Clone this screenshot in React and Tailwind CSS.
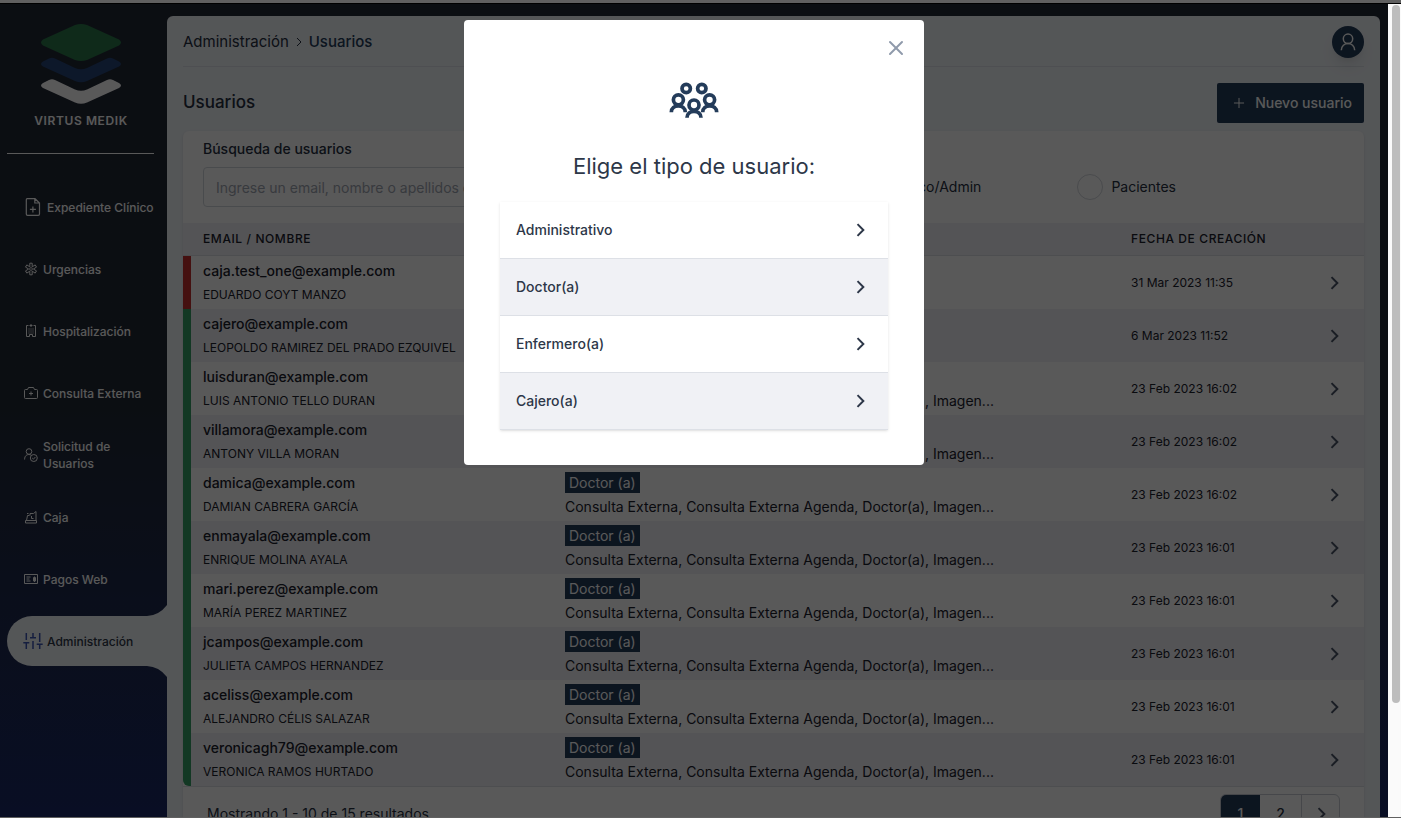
import React from 'react';
import { Plus, X } from 'lucide-react';

const users = [
  { email: 'caja.test_one@example.com', name: 'EDUARDO COYT MANZO', role: 'Cajero (a)', areas: 'Caja', date: '31 Mar 2023 11:35', active: false },
  { email: 'cajero@example.com', name: 'LEOPOLDO RAMIREZ DEL PRADO EZQUIVEL', role: 'Cajero (a)', areas: 'Caja', date: '6 Mar 2023 11:52', active: true },
  { email: 'luisduran@example.com', name: 'LUIS ANTONIO TELLO DURAN', date: '23 Feb 2023 16:02', active: true },
  { email: 'villamora@example.com', name: 'ANTONY VILLA MORAN', date: '23 Feb 2023 16:02', active: true },
  { email: 'damica@example.com', name: 'DAMIAN CABRERA GARCÍA', date: '23 Feb 2023 16:02', active: true },
  { email: 'enmayala@example.com', name: 'ENRIQUE MOLINA AYALA', date: '23 Feb 2023 16:01', active: true },
  { email: 'mari.perez@example.com', name: 'MARÍA PEREZ MARTINEZ', date: '23 Feb 2023 16:01', active: true },
  { email: 'jcampos@example.com', name: 'JULIETA CAMPOS HERNANDEZ', date: '23 Feb 2023 16:01', active: true },
  { email: 'aceliss@example.com', name: 'ALEJANDRO CÉLIS SALAZAR', date: '23 Feb 2023 16:01', active: true },
  { email: 'veronicagh79@example.com', name: 'VERONICA RAMOS HURTADO', date: '23 Feb 2023 16:01', active: true },
];

const doctorAreas = 'Consulta Externa, Consulta Externa Agenda, Doctor(a), Imagen...';

const userTypes = ['Administrativo', 'Doctor(a)', 'Enfermero(a)', 'Cajero(a)'];

const Chevron = () => (
  <svg className="size-5" viewBox="0 0 24 24" fill="none" stroke="currentColor" strokeWidth="2.4" aria-hidden="true">
    <path d="M9 5l7 7-7 7" />
  </svg>
);

const Icon = ({ children }) => (
  <svg className="size-3.5 shrink-0" viewBox="0 0 14 14" fill="none" stroke="currentColor" aria-hidden="true">
    {children}
  </svg>
);

const FileIcon = () => (
  <svg className="h-[18px] w-4 shrink-0" viewBox="0 0 16 18" fill="none" stroke="currentColor" strokeWidth="1.2" aria-hidden="true">
    <path d="M2.2.7H10L14.5 5V16a1.3 1.3 0 0 1-1.3 1.3H2.6A1.3 1.3 0 0 1 1.3 16V1.7a1 1 0 0 1 .9-1zM9.8.8V5h4.6M7.9 8.4v6M4.9 11.4h6" />
  </svg>
);

const StarIcon = () => (
  <Icon>
    <path d="M5.8 1.2h2.4v3.6l3-1.9 1.3 2.2L9.4 7l3.1 1.9-1.3 2.2-3-1.9v3.6H5.8V9.2l-3 1.9-1.3-2.2L4.6 7 1.5 5.1l1.3-2.2 3 1.9z" />
    <circle cx="7" cy="7" r="1.4" strokeWidth="0.8" />
  </Icon>
);

const BuildingIcon = () => (
  <Icon>
    <path d="M4.5 1.5h-2v11h3v-2h3v2h3v-11h-2M7 0v3M5.500 1.500h3" />
    <path strokeDasharray="1 1" d="M5 4.500v5M7 4.500v5M9 4.500v5" />
  </Icon>
);

const KitIcon = () => (
  <Icon>
    <path d="M1.500 3.500h2L4.500 1.500h5l1 2h2q1 0 1 1v7q0 1-1 1h-11q-1 0-1-1v-7q0-1 1-1zM7 5.500v4M5 7.500h4" />
  </Icon>
);

const UserCheckIcon = () => (
  <Icon>
    <circle cx="5" cy="3.500" r="2.800" />
    <path d="M.6 11.500C.6 7.500 3 6.500 5 6.500q1.500 0 2.500 1" />
    <circle cx="9.800" cy="10" r="3.500" />
    <path d="M8.200 10l1.200 1.200 2-2.200" />
  </Icon>
);

const RegisterIcon = () => (
  <Icon>
    <path d="M1.500 10.500h11v2.500h-11zM2.500 10.500l1-5h2M12 10.500V1.500L9.500 3.500h-3.500v2M7.500 6v2.500h2M3 3.500h1.500" />
  </Icon>
);

const CardIcon = () => (
  <Icon>
    <path d="M.5 2.500h13v9H.5zM2.500 5h4M2.500 7h3M2.500 9h4M9.500 5.500h2v3.500h-2zM10.500 4.500v5.500" />
  </Icon>
);

const SlidersIcon = () => (
  <svg className="h-[18px] w-5 shrink-0 text-[#3c56b4]" viewBox="0 0 20 18" fill="none" stroke="currentColor" strokeWidth="1.5" aria-hidden="true">
    <path d="M3.300 1v7M.3 10.700h6M3.300 10.700V17M10 1v4.500M7 5.700h6M10 9v8M16.700 1v9M13.700 12.200h6M16.700 12.200V17" />
  </svg>
);

const PersonIcon = () => (
  <svg className="size-5" viewBox="0 0 20 20" fill="none" stroke="currentColor" strokeWidth="1.500" aria-hidden="true">
    <circle cx="10" cy="6.800" r="4.700" />
    <path d="M3.300 18.300c0-9 13.400-9 13.400 0" />
  </svg>
);

const GroupIcon = () => (
  <svg className="h-9 w-[50px]" viewBox="0 0 50 36" fill="none" stroke="currentColor" strokeWidth="3.700" aria-hidden="true">
    <circle cx="17.200" cy="6.500" r="4.200" />
    <circle cx="32.800" cy="6.500" r="4.200" />
    <circle cx="9.400" cy="17.800" r="5" />
    <circle cx="40.600" cy="17.800" r="5" />
    <circle cx="25" cy="23" r="5" />
    <path d="M2.300 30.300c0-8.600 14-8.600 14 0M33.700 30.300c0-8.600 14-8.600 14 0M18 35.800c0-8.600 14-8.600 14 0" />
  </svg>
);

const Logo = () => (
  <svg className="size-20" viewBox="0 0 80 80" aria-hidden="true">
    <path fill="#2b7a4b" d="M34 1Q40-1 46 1L78 15.500Q82 18.500 78 21.500L46 36Q40 38 34 36L2 21.500Q-2 18.500 2 15.500Z" />
    <path fill="#26467a" d="M2 37.500L8 34.500Q11 33 14 34.500L34 44Q40 46.500 46 44L66 34.500Q69 33 72 34.500L78 37.500Q82 40 78 42.500L46 57Q40 59.500 34 57L2 42.500Q-2 40 2 37.500Z" />
    <path fill="#ffffff" d="M2 59L8 56Q11 54.500 14 56L34 65.500Q40 68 46 65.500L66 56Q69 54.500 72 56L78 59Q82 61.500 78 64L46 78.500Q40 81 34 78.500L2 64Q-2 61.500 2 59Z" />
  </svg>
);

const menu = [
  { label: 'Expediente Clínico', icon: <FileIcon />, wide: true },
  { label: 'Urgencias', icon: <StarIcon /> },
  { label: 'Hospitalización', icon: <BuildingIcon /> },
  { label: 'Consulta Externa', icon: <KitIcon /> },
  { label: 'Solicitud de Usuarios', icon: <UserCheckIcon /> },
  { label: 'Caja', icon: <RegisterIcon /> },
  { label: 'Pagos Web', icon: <CardIcon /> },
];

const Sidebar = () => (
  <aside className="w-[167px] shrink-0 text-white">
    <div className="mr-[5px] flex flex-col items-center pt-5">
      <Logo />
      <p className="mt-[9px] text-xs leading-4 font-semibold tracking-wider">VIRTUS MEDIK</p>
    </div>
    <hr className="mt-6 mr-[13px] ml-[7px] border-white" />
    <nav className="mt-[22px] text-xs leading-[17px] font-medium">
      {menu.map((item) => (
        <a
          key={item.label}
          href="#"
          className={item.wide ? 'flex h-[62px] items-center gap-[6px] pl-[25px] whitespace-nowrap' : 'flex h-[62px] items-center gap-[5px] pr-6 pl-6'}
        >
          {item.icon}
          <span>{item.label}</span>
        </a>
      ))}
      <a href="#" className="relative mt-[6px] ml-[7px] flex h-[50px] items-center gap-1 rounded-l-full bg-[#f1f5f9] pl-4 text-[#2d3748]">
        <svg className="absolute -top-[11px] right-0 h-[11px] w-5 text-[#f1f5f9]" viewBox="0 0 20 11" fill="currentColor" aria-hidden="true">
          <path d="M0 11Q12 10.500 20 0V11Z" />
        </svg>
        <SlidersIcon />
        <span>Administración</span>
        <svg className="absolute right-0 -bottom-[11px] h-[11px] w-5 text-[#f1f5f9]" viewBox="0 0 20 11" fill="currentColor" aria-hidden="true">
          <path d="M0 0Q12 .5 20 11V0Z" />
        </svg>
      </a>
    </nav>
  </aside>
);

const UserRow = ({ user }) => (
  <tr className="h-[53px] even:bg-[#f0f1f5] [&:last-child>td:first-child]:rounded-bl-md">
    <td className={user.active ? 'border-l-8 border-[#38a169] pl-3' : 'border-l-8 border-[#c53030] pl-3'}>
      <div className="text-sm leading-6 font-medium">{user.email}</div>
      <div className="text-xs leading-6">{user.name}</div>
    </td>
    <td className="pl-5">
      <div className="flex h-6 items-center">
        <span className="bg-[#243c5a] px-1 text-sm leading-[21px] text-white">{user.role || 'Doctor (a)'}</span>
      </div>
      <div className="truncate text-sm leading-6">{user.areas || doctorAreas}</div>
    </td>
    <td className="pl-5 text-xs">{user.date}</td>
    <td className="pl-5">
      <button type="button" className="block text-[#4a5568]" aria-label={`Ver ${user.email}`}>
        <Chevron />
      </button>
    </td>
  </tr>
);

const UsersCard = () => (
  <section className="mt-2 rounded-md bg-white shadow">
    <div className="px-5 pt-[9px] pb-4">
      <label htmlFor="search" className="block text-sm leading-[18px] font-medium">Búsqueda de usuarios</label>
      <div className="mt-[9px] flex items-center">
        <input
          id="search"
          type="text"
          placeholder="Ingrese un email, nombre o apellidos del usuario"
          className="h-10 w-[420px] rounded border border-[#d2d6dc] px-3 text-sm placeholder:text-[#9fa6b2]"
        />
        <div className="flex flex-1 justify-end gap-24 pr-[168px] text-sm">
          <label className="flex items-center gap-2">
            <input type="radio" name="kind" className="size-[26px] appearance-none rounded-full border border-[#d2d6dc]" />
            Médico/Admin
          </label>
          <label className="flex items-center gap-2">
            <input type="radio" name="kind" className="size-[26px] appearance-none rounded-full border border-[#d2d6dc]" />
            Pacientes
          </label>
        </div>
      </div>
    </div>
    <table className="w-full table-fixed border-separate border-spacing-0 text-left text-[#1a202c]">
      <thead>
        <tr className="h-[33px] bg-[#f0f1f5] text-xs tracking-wider">
          <th className="w-[362px] border-b border-[#dde0e6] pl-5 font-medium">EMAIL / NOMBRE</th>
          <th className="border-b border-[#dde0e6] pl-5 font-medium">ROL / ÁREAS</th>
          <th className="w-[193px] border-b border-[#dde0e6] pl-5 font-medium">FECHA DE CREACIÓN</th>
          <th className="w-[60px] border-b border-[#dde0e6]" aria-label="Acciones" />
        </tr>
      </thead>
      <tbody>
        {users.map((user) => <UserRow key={user.email} user={user} />)}
      </tbody>
    </table>
    <div className="flex items-center justify-between border-t border-[#dde0e6] px-6 py-[7px] text-sm">
      <p>Mostrando 1 - 10 de 15 resultados</p>
      <div className="flex h-10 overflow-hidden rounded-md border border-[#c8ccd4] font-medium">
        <button type="button" className="w-[39px] bg-[#243c5a] text-white">1</button>
        <button type="button" className="w-[42px] border-r border-[#c8ccd4]">2</button>
        <button type="button" className="flex w-[37px] items-center justify-center text-[#4a5568]" aria-label="Siguiente"><Chevron /></button>
      </div>
    </div>
  </section>
);

const UserTypeModal = () => (
  <div role="dialog" aria-modal="true" aria-labelledby="modal-title" className="w-[460px] rounded bg-white px-9 pb-[35px] text-[#2d3748]">
    <div className="-mr-[22px] flex justify-end pt-[14px]">
      <button type="button" className="p-[2px] text-[#8f9aab]" aria-label="Cerrar"><X className="size-6" strokeWidth={2} /></button>
    </div>
    <div className="mt-5 flex justify-center text-[#243c5a]"><GroupIcon /></div>
    <h2 id="modal-title" className="mt-8 text-center text-[22px] leading-8">Elige el tipo de usuario:</h2>
    <ul className="mt-5 shadow">
      {userTypes.map((type) => (
        <li key={type} className="border-b border-[#dde0e6] even:bg-[#f0f1f5]">
          <button type="button" className="flex h-14 w-full items-center justify-between pr-[18px] pl-4 text-sm font-medium">
            {type}
            <Chevron />
          </button>
        </li>
      ))}
    </ul>
  </div>
);

const App = () => (
  <div className="flex h-screen flex-col overflow-hidden bg-[#606060] font-['Inter',sans-serif]">
    <div className="mt-[3px] mb-px flex min-h-0 flex-1 border-t border-black">
      <div className="relative flex min-w-0 flex-1 overflow-hidden bg-linear-to-b from-[#222836] from-50% to-[#1b2a68] text-[#252f3f]">
        <Sidebar />
        <main className="mt-3 mr-2 h-fit min-w-0 flex-1 rounded-md bg-[#f1f5f9] px-4 pb-4">
          <header className="flex h-[51px] items-center justify-between border-b border-[#dfe3ea] pt-0.5">
            <nav className="flex items-center gap-1 text-[15px]" aria-label="Ruta">
              <a href="#">Administración</a>
              <svg className="size-3" viewBox="0 0 12 12" fill="none" stroke="currentColor" aria-hidden="true"><path d="M4 2l4 4-4 4" /></svg>
              <a href="#" className="font-medium text-[#243c5a]">Usuarios</a>
            </nav>
            <button type="button" className="flex size-8 items-center justify-center rounded-full bg-[#243c5a] text-white shadow-lg" aria-label="Perfil"><PersonIcon /></button>
          </header>
          <div className="mt-4 flex items-center justify-between">
            <h1 className="text-[17px] font-medium">Usuarios</h1>
            <button type="button" className="flex h-10 items-center gap-2 rounded-xs bg-[#243c5a] pr-3 pl-[14px] text-sm font-medium text-white">
              <Plus className="size-4" strokeWidth={1.5} />
              Nuevo usuario
            </button>
          </div>
          <UsersCard />
        </main>
        <div className="absolute inset-0 flex items-start justify-center bg-black/65 pt-4">
          <UserTypeModal />
        </div>
      </div>
      <div className="w-[13px] shrink-0 bg-[#fafafa] px-[3px] pt-px" aria-hidden="true">
        <div className="ml-px h-[86%] w-2 rounded-full bg-[#bdbdbd]" />
      </div>
    </div>
  </div>
);

export default App;
